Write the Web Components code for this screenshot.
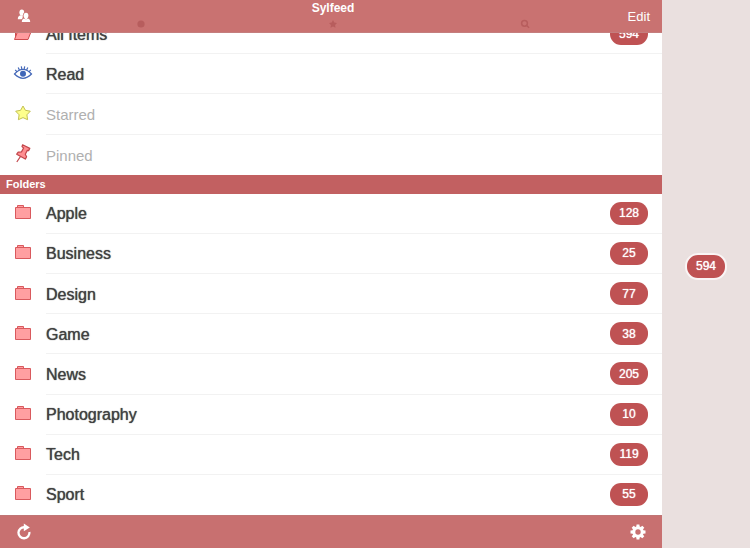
<!DOCTYPE html>
<html lang="en">
<head>
<meta charset="utf-8">
<meta name="viewport" content="width=device-width, initial-scale=1">
<title>Sylfeed</title>
<style>
body{
  margin: 0;
  background-color: #eae0df;
  font-family: "Liberation Sans", "Helvetica Neue", Helvetica, Arial, sans-serif;
}
</style>
</head>
<body>
<sylfeed-app></sylfeed-app>

<script>
const icons = {
  people: `<svg viewBox="0 0 14 14" width="14" height="14" fill="#fff"><ellipse cx="4.800" cy="3.500" rx="2.400" ry="2.900"/><path d="M.8 10.200C.8 7.600 1.800 6.700 3.600 6.300h2.200l-.3 3.900z"/><g stroke="#c97271" stroke-width="1.400" paint-order="stroke"><path d="M4.800 13c0-2.400 1-3.400 2.800-3.800h2.800c1.800.4 2.800 1.400 2.800 3.800z"/><ellipse cx="9" cy="6.600" rx="2.400" ry="2.900"/></g><path d="M7.700 8.500h2.600v1.700H7.700z"/></svg>`,
  open: `<svg viewBox="0 0 20 16" width="20" height="16" fill="#ff9c9f" stroke="#cf4b4e"><path d="M2.500 14.500v-12h5l1 2h7v2"/><path d="M1.500 14.500 5 5.500h13.500l-3.500 9z"/></svg>`,
  eye: `<svg viewBox="0 0 20 16" width="20" height="16" fill="none" stroke="#4468b8" stroke-width="1.200"><path d="M1.500 9Q10-.2 18.500 9 10 17.600 1.500 9z"/><path d="M2.200 4.800l1.900 2M5.200 2.600l1.200 2.500M8.300 1.400l.5 2.600M11.700 1.400l-.5 2.600M14.800 2.600l-1.200 2.500M17.800 4.800l-1.900 2"/><circle cx="10" cy="8.800" r="3" fill="#3f66b8" stroke="none"/></svg>`,
  star: `<svg viewBox="0 0 20 16" width="20" height="16" fill="#feff8c" stroke="#c3c152" stroke-linejoin="round"><path d="M10 1l2.400 4.300 4.900.9-3.400 3.600.7 4.900-4.600-2.100-4.600 2.100.7-4.900-3.400-3.600 4.900-.9z"/></svg>`,
  pin: `<svg viewBox="0 0 20 20" width="20" height="20" fill="#ff8f92" stroke="#c2464b" stroke-width="1.200" stroke-linejoin="round"><path d="M9.600 1.800l7.200 3.600-1.200 2.200-1.300-.2-2 3.800 1.300 2.600-1.300 2.300-8.600-4.900 1.500-2.100 3.300-.2 2.100-3.900-1.600-1.400z"/><path d="M7.400 13.700 3.800 19" fill="none"/></svg>`,
  folder: `<svg viewBox="0 0 20 16" width="20" height="16" fill="#ff9fa1" stroke="#d9595d"><path d="M4.500 3.500v-2h6v2"/><path d="M2.500 3.500h15v11h-15z"/></svg>`,
  dot: `<svg viewBox="0 0 8 8" width="8" height="8"><circle cx="4" cy="4" r="3.600"/></svg>`,
  smallstar: `<svg viewBox="0 0 8 8" width="8" height="8"><path d="M4 0l1.300 2.400L8 2.900 6.100 4.900l.4 2.900L4 6.600 1.500 7.800l.4-2.900L0 2.900l2.700-.5z"/></svg>`,
  search: `<svg viewBox="0 0 10 10" width="10" height="10" fill="none" stroke="currentColor" stroke-width="1.500"><circle cx="4.500" cy="4.300" r="2.900"/><path d="M6.700 6.500l2.400 2.300"/></svg>`,
  refresh: `<svg viewBox="0 0 16 18" width="16" height="18"><path d="M8.600 4.300A5.500 5.500 0 1 0 13.400 9" fill="none" stroke="#fff" stroke-width="2.300"/><path d="M7.800.6l6 4-6 3.600z" fill="#fff"/></svg>`,
  gear: `<svg viewBox="-8 -8 16 16" width="16" height="16" fill="#fff"><path d="M-1.800-4.500-1.400-7.500h2.800l.4 3v9l-.4 3h-2.800l-.4-3z" id="a"/><path d="M0-5.700A5.700 5.700 0 1 0 0 5.700 5.700 5.700 0 1 0 0-5.700z"/><use href="#a" transform="rotate(45)"/><use href="#a" transform="rotate(90)"/><use href="#a" transform="rotate(135)"/><circle r="2.700" fill="#c87070"/></svg>`
};

class count_badge extends HTMLElement {
  constructor() {
    super();
    this.attachShadow({ mode: "open" }).innerHTML = `
      <style>
:host{
  display: inline-flex;
  align-items: center;
  justify-content: center;
  min-width: 38px;
  height: 23px;
  border-radius: 11px;
  background-color: #bf5253;
  color: #fff;
  font-size: 12px;
  text-shadow: 0 0 1px #fff;
}
:host([outlined]){
  border: 2px solid #faf5f5;
  border-radius: 13px;
}
      </style>
      <slot></slot>
    `;
  }
}
customElements.define("count-badge", count_badge);

class feed_row extends HTMLElement {
  constructor() {
    super();
    const count = this.getAttribute("count");
    this.attachShadow({ mode: "open" }).innerHTML = `
      <style>
:host{
  display: flex;
  flex: 1 0 40px;
}
a{
  flex: 1;
  display: flex;
  align-items: stretch;
  padding-left: 13px;
  color: #414141;
  text-decoration: none;
}
.icon{
  display: flex;
  align-items: center;
  width: 33px;
  padding-bottom: 3px;
}
.content{
  flex: 1;
  display: flex;
  align-items: center;
  justify-content: space-between;
  padding-right: 14px;
  border-bottom: 1px solid #f2f2f2;
}
.label{
  padding-top: 2px;
  font-size: 16px;
  text-shadow: 0 0 1px #414141;
}
:host([last]) .content{
  border-bottom-color: transparent;
}
:host([muted]) .label{
  color: #b0b0b0;
  font-size: 15px;
  text-shadow: none;
}
      </style>
      <a href="#">
        <span class="icon">${icons[this.getAttribute("icon")]}</span>
        <span class="content">
          <span class="label"><slot></slot></span>
          ${count ? `<count-badge>${count}</count-badge>` : ""}
        </span>
      </a>
    `;
  }
}
customElements.define("feed-row", feed_row);

class section_title extends HTMLElement {
  constructor() {
    super();
    this.attachShadow({ mode: "open" }).innerHTML = `
      <style>
:host{
  display: block;
}
h2{
  margin: 0;
  padding: 0 6px;
  background-color: #c26061;
  color: #fff;
  font-size: 11px;
  line-height: 19px;
  font-weight: 600;
}
      </style>
      <h2><slot></slot></h2>
    `;
  }
}
customElements.define("section-title", section_title);

class top_bar extends HTMLElement {
  constructor() {
    super();
    this.attachShadow({ mode: "open" }).innerHTML = `
      <style>
:host{
  display: block;
  position: relative;
  z-index: 1;
}
header{
  display: grid;
  grid-template-columns: 45px 1fr 41px;
  height: 33px;
  box-sizing: border-box;
  background-color: #c97271;
  border-bottom: 1px solid #c47e7e;
}
button{
  display: flex;
  align-items: center;
  padding: 0;
  border: 0;
  background: none;
  color: #fff;
  font: inherit;
  cursor: pointer;
}
.account{
  padding-left: 17px;
}
.edit{
  justify-content: flex-end;
  padding-right: 12px;
  font-size: 13px;
}
h1{
  margin: 0;
  color: #fff;
  font-size: 12px;
  line-height: 16px;
  font-weight: 600;
  text-align: center;
}
nav{
  display: grid;
  grid-template-columns: 1fr 1fr 1fr;
}
nav button{
  justify-content: center;
  height: 16px;
  color: #b75d5d;
  fill: #b75d5d;
}
      </style>
      <header>
        <button class="account" aria-label="Accounts">${icons.people}</button>
        <div>
          <h1><slot></slot></h1>
          <nav>
            <button aria-label="Unread">${icons.dot}</button>
            <button aria-label="Starred">${icons.smallstar}</button>
            <button aria-label="Search">${icons.search}</button>
          </nav>
        </div>
        <button class="edit">Edit</button>
      </header>
    `;
  }
}
customElements.define("top-bar", top_bar);

class bottom_bar extends HTMLElement {
  constructor() {
    super();
    this.attachShadow({ mode: "open" }).innerHTML = `
      <style>
:host{
  display: block;
}
footer{
  display: flex;
  align-items: center;
  justify-content: space-between;
  height: 33px;
  box-sizing: border-box;
  padding: 0 16px;
  background-color: #c87070;
  border-top: 1px solid #c07575;
}
button{
  display: flex;
  padding: 0;
  border: 0;
  background: none;
  cursor: pointer;
}
      </style>
      <footer>
        <button aria-label="Refresh">${icons.refresh}</button>
        <button aria-label="Settings">${icons.gear}</button>
      </footer>
    `;
  }
}
customElements.define("bottom-bar", bottom_bar);

class sylfeed_app extends HTMLElement {
  constructor() {
    super();
    this.attachShadow({ mode: "open" }).innerHTML = `
      <style>
:host{
  display: flex;
  min-height: 100vh;
}
main{
  flex: 1;
  display: flex;
  flex-direction: column;
  background-color: #fff;
}
/* the list is scrolled a little way under the top bar */
.list{
  flex: 1;
  display: flex;
  flex-direction: column;
  margin-top: -19px;
}
aside{
  display: flex;
  align-items: center;
  justify-content: center;
  width: 88px;
  padding-bottom: 16px;
  box-sizing: border-box;
  background-color: #eae0df;
}
      </style>
      <main>
        <top-bar>Sylfeed</top-bar>
        <div class="list">
          <feed-row icon="open" count="594">All Items</feed-row>
          <feed-row icon="eye">Read</feed-row>
          <feed-row icon="star" muted>Starred</feed-row>
          <feed-row icon="pin" muted last>Pinned</feed-row>
          <section-title>Folders</section-title>
          <feed-row icon="folder" count="128">Apple</feed-row>
          <feed-row icon="folder" count="25">Business</feed-row>
          <feed-row icon="folder" count="77">Design</feed-row>
          <feed-row icon="folder" count="38">Game</feed-row>
          <feed-row icon="folder" count="205">News</feed-row>
          <feed-row icon="folder" count="10">Photography</feed-row>
          <feed-row icon="folder" count="119">Tech</feed-row>
          <feed-row icon="folder" count="55" last>Sport</feed-row>
        </div>
        <bottom-bar></bottom-bar>
      </main>
      <aside>
        <count-badge outlined>594</count-badge>
      </aside>
    `;
  }
}
customElements.define("sylfeed-app", sylfeed_app);
</script>
</body>
</html>
